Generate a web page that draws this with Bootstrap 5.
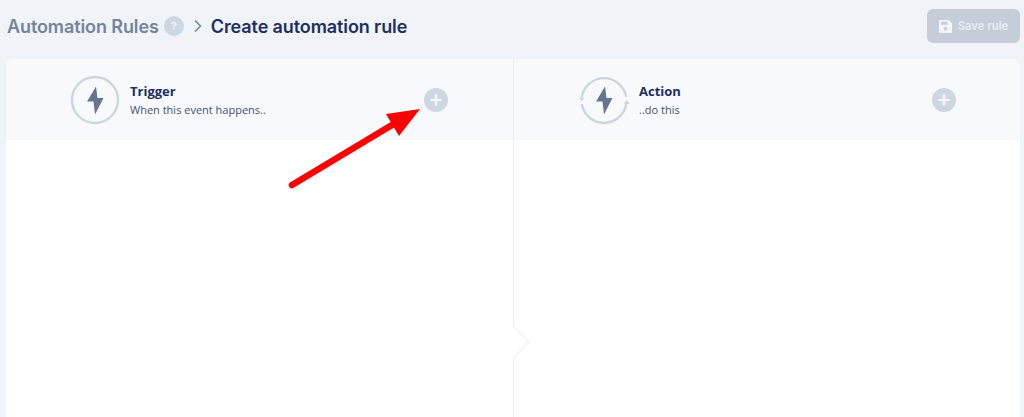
<!DOCTYPE html>
<html lang="en">
<head>
    <meta charset="UTF-8">
    <meta name="viewport" content="width=device-width, initial-scale=1.0">
    <title>Create automation rule</title>
    <link rel="stylesheet" href="https://cdn.jsdelivr.net/npm/bootstrap@5.3.1/dist/css/bootstrap.min.css" />
    <style>
        html, body { height: 417px; overflow: hidden; }
        body { background: #f0f4f9; font-family: "Inter", "Liberation Sans", sans-serif; position: relative; }
        .page-wrap { padding: 9px 4px 0 6px; height: 417px; }
        .top-bar { height: 50px; padding-bottom: 16px; }
        .crumb-row { padding-left: 1px; }
        .crumb-link { font-size: 18px; font-weight: 600; color: #74839b; letter-spacing: -0.1px; }
        .crumb-current { font-size: 18px; font-weight: 600; color: #1d2f5f; letter-spacing: -0.1px; margin-left: 8px; }
        .help-dot { width: 20px; height: 20px; border-radius: 50%; background: #cdd7e3; color: #f0f4f9; font-size: 11px; font-weight: 700; margin-left: 5px; margin-right: 9px; }
        .save-btn { width: 93px; height: 34px; padding: 0; border: 0; border-radius: 6px; background: #c5ced8; color: #e9edf2; font-size: 11.3px; font-weight: 600; gap: 6px; }
        .save-btn:disabled { background: #c5ced8; color: #e9edf2; opacity: 1; }
        .rule-panel { height: 358px; background: #fff; border-radius: 8px 8px 0 0; overflow: hidden; position: relative; }
        .rule-col { width: 50%; position: relative; }
        .rule-col + .rule-col { border-left: 1px solid #eceff3; }
        .rule-head { height: 81px; padding: 0 65px; background-color: #f7f9fb; background-image: radial-gradient(#fdfdfe 0.6px, transparent 0.7px); background-size: 4px 4px; }
        .rule-col + .rule-col .rule-head { padding: 0 64px 0 66px; }
        .step-icon { margin-right: 11px; overflow: visible; }
        .step-text { padding-top: 2px; }
        .step-title { font-family: "Open Sans", "Liberation Sans", sans-serif; font-size: 13px; font-weight: 700; color: #1d2f5f; line-height: 18px; }
        .step-sub { font-family: "Open Sans", "Liberation Sans", sans-serif; font-size: 11px; color: #3f5178; line-height: 18px; margin-top: 1px; }
        .add-dot { width: 24px; height: 24px; border-radius: 50%; background: #cdd7e3; }
        .panel-notch { position: absolute; left: 507px; top: 267px; }
        .note-arrow { position: absolute; left: 0; top: 0; pointer-events: none; }
    </style>
</head>
<body>
    <div class="page-wrap">
        <div class="top-bar d-flex justify-content-between align-items-center">
            <div class="crumb-row d-flex align-items-center">
                <span class="crumb-link">Automation Rules</span>
                <span class="help-dot d-flex align-items-center justify-content-center">?</span>
                <svg width="10" height="14" viewBox="0 0 10 14"><path d="M2 1.500l5.500 5.500-5.500 5.500" fill="none" stroke="#74839b" stroke-width="1.500"/></svg>
                <span class="crumb-current">Create automation rule</span>
            </div>
            <button class="save-btn d-flex align-items-center justify-content-center" type="button" disabled>
                <svg width="13" height="13" viewBox="0 0 12 12"><path d="M1 0h8l3 3v8a1 1 0 0 1-1 1H1a1 1 0 0 1-1-1V1a1 1 0 0 1 1-1z" fill="#f3f5f8"/><rect x="2" y="1.500" width="6" height="3" fill="#c5ced8"/><circle cx="6" cy="8" r="1.700" fill="#c5ced8"/></svg>
                Save rule
            </button>
        </div>

        <div class="rule-panel d-flex">
            <div class="rule-col">
                <div class="rule-head d-flex align-items-center justify-content-between">
                    <div class="d-flex align-items-center">
                        <svg width="48" height="48" viewBox="0 0 48 48" class="step-icon">
                            <circle cx="24" cy="24" r="23" fill="none" stroke="#cbd6e2" stroke-width="2.400"/>
                            <path d="M25 10.500L16 25.500h6.500L24 38.500 32.500 22h-6z" fill="#66758f"/>
                        </svg>
                        <div class="step-text">
                            <div class="step-title">Trigger</div>
                            <div class="step-sub">When this event happens..</div>
                        </div>
                    </div>
                    <span class="add-dot d-flex align-items-center justify-content-center">
                        <svg width="12" height="12" viewBox="0 0 12 12"><path d="M6 1.500v9M1.500 6h9" stroke="#f3f6f9" stroke-width="2.600" stroke-linecap="round"/></svg>
                    </span>
                </div>
            </div>
            <div class="rule-col">
                <div class="rule-head d-flex align-items-center justify-content-between">
                    <div class="d-flex align-items-center">
                        <svg width="48" height="48" viewBox="0 0 48 48" class="step-icon">
                            <path d="M1.800 21A22.500 22.500 0 0 1 46.200 21M46.200 28A22.500 22.500 0 0 1 1.800 28" fill="none" stroke="#cbd6e2" stroke-width="2.400"/>
                            <path d="M-1 21.500h5.500l-2.750 4zM44 28h5.500l-2.750-4.500z" fill="#cbd6e2"/>
                            <path d="M25 10.500L16 25.500h6.500L24 38.500 32.500 22h-6z" fill="#66758f"/>
                        </svg>
                        <div class="step-text">
                            <div class="step-title">Action</div>
                            <div class="step-sub">..do this</div>
                        </div>
                    </div>
                    <span class="add-dot d-flex align-items-center justify-content-center">
                        <svg width="12" height="12" viewBox="0 0 12 12"><path d="M6 1.500v9M1.500 6h9" stroke="#f3f6f9" stroke-width="2.600" stroke-linecap="round"/></svg>
                    </span>
                </div>
            </div>
            <svg class="panel-notch" width="20" height="34" viewBox="0 0 20 34">
                <path d="M0 0h1v33H0z" fill="#fff"/>
                <path d="M.5 0L16 16 .5 32" fill="#fff" stroke="#f0f2f5" stroke-width="1.200"/>
            </svg>
        </div>
    </div>

    <svg class="note-arrow" width="1024" height="417" viewBox="0 0 1024 417">
        <path d="M292 185L392 125" stroke="#fe0000" stroke-width="6.500" stroke-linecap="round"/>
        <path d="M420 109L386 114L399 136z" fill="#fe0000"/>
    </svg>
</body>
</html>
